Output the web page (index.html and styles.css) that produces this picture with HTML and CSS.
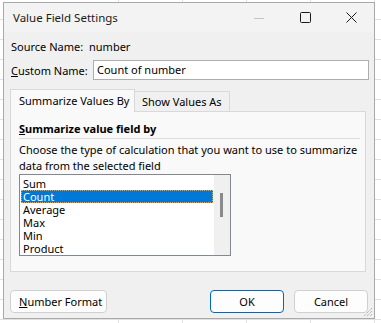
FILE: index.html
```html
<!DOCTYPE html>
<html lang="en">
<head>
    <meta charset="UTF-8">
    <meta name="viewport" content="width=device-width, initial-scale=1.0">
    <title>Value Field Settings</title>
    <link rel="stylesheet" href="styles.css">
</head>
<body>
    <div class="dialog">
        <div class="titlebar">
            <span class="title">Value Field Settings</span>
            <div class="wincontrols">
                <span class="winbtn">
                    <svg width="10" height="10" viewBox="0 0 10 10"><path d="M0 5.5h10" stroke="#c4c4c4" stroke-width="1"/></svg>
                </span>
                <span class="winbtn">
                    <svg width="11" height="11" viewBox="0 0 11 11"><rect x="0.5" y="0.5" width="10" height="10" rx="1" fill="none" stroke="#1a1a1a" stroke-width="1"/></svg>
                </span>
                <span class="winbtn">
                    <svg width="11" height="11" viewBox="0 0 11 11"><path d="M0.5 0.5l10 10M10.5 0.5l-10 10" stroke="#1a1a1a" stroke-width="1"/></svg>
                </span>
            </div>
        </div>

        <div class="body">
            <div class="row source">
                <span class="label">Source Name:</span>
                <span class="value">number</span>
            </div>
            <div class="row custom">
                <span class="label"><u>C</u>ustom Name:</span>
                <div class="textbox">Count of number</div>
            </div>

            <div class="tabs">
                <div class="tab active">Summarize Values By</div>
                <div class="tab">Show Values As</div>
            </div>
            <div class="panel">
                <div class="heading"><u>S</u>ummarize value field by</div>
                <p class="desc">Choose the type of calculation that you want to use to summarize<br>data from the selected field</p>
                <div class="listbox">
                    <ul class="items">
                        <li>Sum</li>
                        <li class="selected">Count</li>
                        <li>Average</li>
                        <li>Max</li>
                        <li>Min</li>
                        <li>Product</li>
                    </ul>
                    <div class="scrollbar"><div class="thumb"></div></div>
                </div>
            </div>

            <div class="footer">
                <button class="btn" type="button"><u>N</u>umber Format</button>
                <div class="spacer"></div>
                <button class="btn default" type="button">OK</button>
                <button class="btn" type="button">Cancel</button>
            </div>
        </div>
        <svg class="grip" width="10" height="10" viewBox="0 0 10 10">
            <path d="M9 1L1 9M9 4L4 9M9 7L7 9" stroke="#a0a0a0" stroke-width="1" stroke-dasharray="1 1"/>
        </svg>
    </div>
</body>
</html>
```

FILE: styles.css
```css
body {
    margin: 0;
    height: 323px;
    overflow: hidden;
    font-family: "Noto Sans", "Open Sans", sans-serif;
    font-size: 11px;
    color: #000;
    white-space: nowrap;
    background-color: #fff;
    background-image:
        repeating-linear-gradient(to bottom, transparent 0, transparent 19px, #e1e1e1 19px, #e1e1e1 20px),
        repeating-linear-gradient(to right, transparent 0, transparent 63px, #e1e1e1 63px, #e1e1e1 64px);
    background-position: 0 0, 55px 0;
}

.dialog {
    position: relative;
    box-sizing: border-box;
    width: 372px;
    height: 317px;
    margin: 2px 0 0 3px;
    background: #f0f0f0;
    border: 1px solid #a9a9a9;
    display: flex;
    flex-direction: column;
}

.titlebar {
    height: 29px;
    display: flex;
    align-items: center;
    padding-left: 9px;
    background: #f3f3f3;
}
.title {
    flex: 1;
    font-size: 11.5px;
    color: #1a1a1a;
}
.wincontrols {
    display: flex;
    align-self: stretch;
}
.winbtn {
    width: 46px;
    display: flex;
    align-items: center;
    justify-content: center;
}

.body {
    flex: 1;
    display: flex;
    flex-direction: column;
    padding: 0 6px 0 6px;
}

.row {
    display: flex;
    align-items: center;
    padding-left: 1px;
}
.source {
    height: 28px;
}
.source .label {
    width: 78px;
}
.custom {
    height: 20px;
}
.custom .label {
    width: 82px;
}
.textbox {
    flex: 1;
    height: 20px;
    box-sizing: border-box;
    margin-right: -1px;
    padding: 1px 3px;
    background: #fff;
    border: 1px solid #adadad;
    line-height: 16px;
}

.tabs {
    display: flex;
    align-items: flex-end;
    margin-top: 9px;
    height: 22px;
    position: relative;
    z-index: 1;
}
.tab {
    box-sizing: border-box;
    height: 20px;
    padding: 0 7px;
    border: 1px solid #d9d9d9;
    border-bottom: none;
    background: #f0f0f0;
    line-height: 19px;
}
.tab.active {
    width: 125px;
    height: 23px;
    padding-left: 8px;
    margin-bottom: -1px;
    background: #f9f9f9;
    line-height: 21px;
}
.tab + .tab {
    border-left: none;
    width: 95px;
}

.panel {
    box-sizing: border-box;
    height: 161px;
    margin-right: 2px;
    padding: 8px 5px 0 8px;
    background: #f9f9f9;
    border: 1px solid #d9d9d9;
}
.heading {
    font-weight: bold;
    height: 17px;
    line-height: 17px;
    padding-bottom: 1px;
    border-bottom: 1px solid #dcdcdc;
}
.desc {
    margin: 3px 0 0 0;
    line-height: 16px;
}
.listbox {
    display: flex;
    box-sizing: border-box;
    width: 212px;
    height: 82px;
    margin-top: 0;
    background: #fff;
    border: 1px solid #828790;
}
.items {
    flex: 1;
    list-style: none;
    margin: 0;
    padding: 2px 1px 0 1px;
}
.items li {
    height: 13px;
    line-height: 13px;
    padding-left: 2px;
}
.items li.selected {
    box-sizing: border-box;
    background: #0078d7;
    color: #fff;
    outline: 1px dotted #e8a33d;
    outline-offset: -1px;
}
.scrollbar {
    width: 16px;
    background: #f0f0f0;
    position: relative;
}
.thumb {
    position: absolute;
    left: 6px;
    top: 18px;
    width: 3px;
    height: 24px;
    background: #8a8a8a;
}

.footer {
    display: flex;
    align-items: center;
    gap: 10px;
    margin-top: 18px;
}
.spacer {
    flex: 1;
}
.btn {
    height: 23px;
    min-width: 74px;
    padding: 0 8px;
    font-family: inherit;
    font-size: 11px;
    color: #000;
    background: #fdfdfd;
    border: 1px solid #d0d0d0;
    border-radius: 4px;
}
.btn.default {
    border-color: #0067c0;
}
.footer .btn:first-child {
    width: 97px;
}

.grip {
    position: absolute;
    right: 1px;
    bottom: 1px;
}
```
